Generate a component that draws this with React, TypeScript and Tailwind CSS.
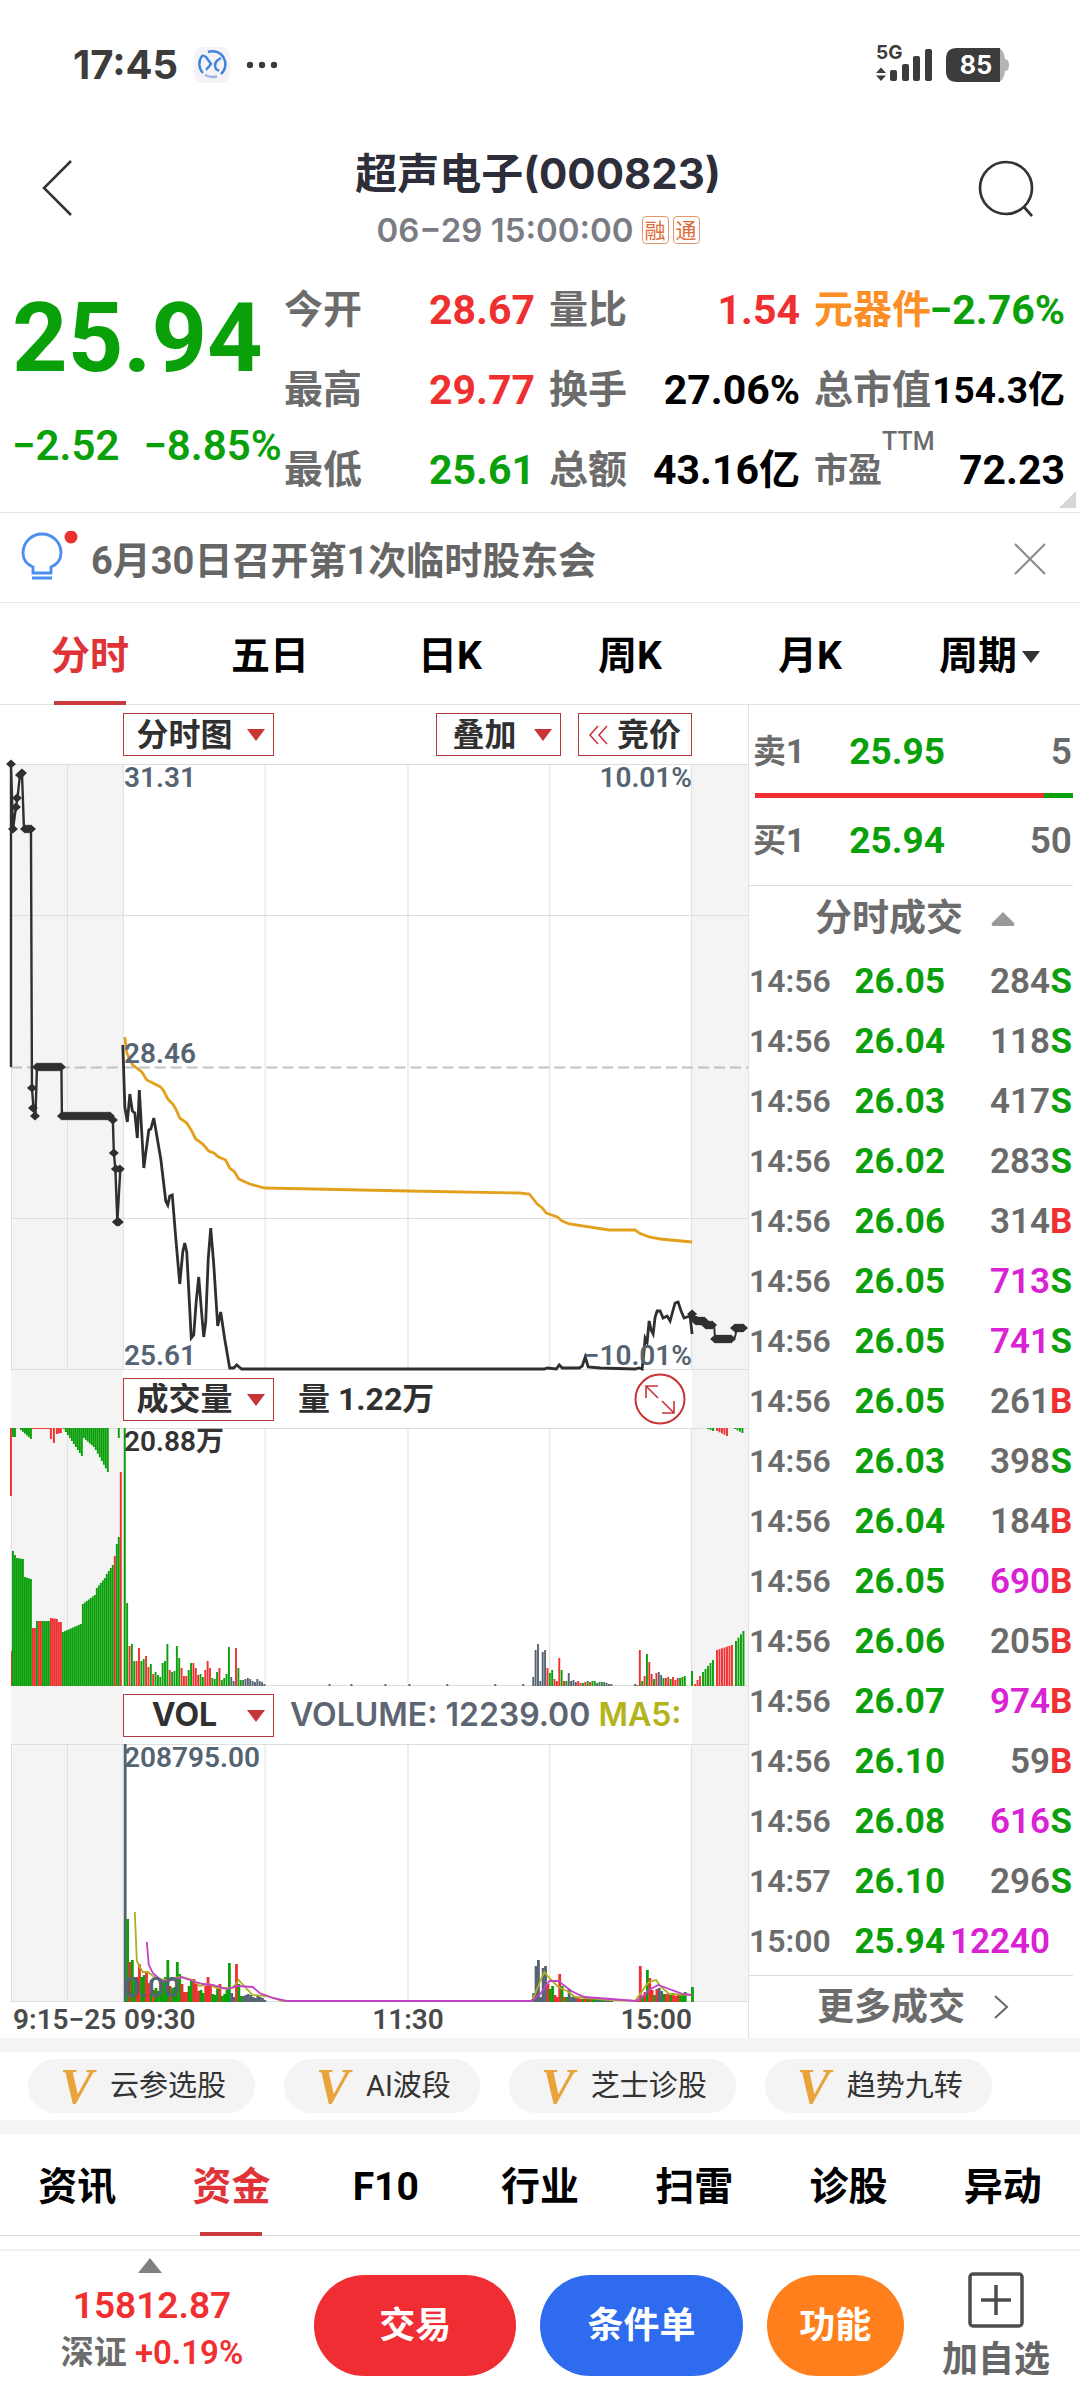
import React, { useState } from "react";
import clsx from "clsx";

const GREEN = "#0aa00a";
const RED = "#f03030";
const SLATE = "#556472";
const MAGENTA = "#c341c6";
const OLIVE = "#b0b01e";

const COLORS: Record<string, string> = { g: GREEN, r: RED, s: SLATE };

const quotes = [
  { label: "今开", value: "28.67", tone: "text-[#f03030]" },
  { label: "量比", value: "1.54", tone: "text-[#f03030]" },
  { label: "元器件", value: "−2.76%", tone: "text-[#0aa00a]", accent: true },
  { label: "最高", value: "29.77", tone: "text-[#f03030]" },
  { label: "换手", value: "27.06%", tone: "text-black" },
  { label: "总市值", value: "154.3亿", tone: "text-black", small: true },
  { label: "最低", value: "25.61", tone: "text-[#0aa00a]" },
  { label: "总额", value: "43.16亿", tone: "text-black" },
  { label: "市盈", value: "72.23", tone: "text-black", sup: "TTM" },
];

const periods = ["分时", "五日", "日K", "周K", "月K", "周期"];
const sections = ["资讯", "资金", "F10", "行业", "扫雷", "诊股", "异动"];
const tools = ["云参选股", "AI波段", "芝士诊股", "趋势九转"];

const trades = [
  ["14:56", "26.05", "284", "S"],
  ["14:56", "26.04", "118", "S"],
  ["14:56", "26.03", "417", "S"],
  ["14:56", "26.02", "283", "S"],
  ["14:56", "26.06", "314", "B"],
  ["14:56", "26.05", "713", "S"],
  ["14:56", "26.05", "741", "S"],
  ["14:56", "26.05", "261", "B"],
  ["14:56", "26.03", "398", "S"],
  ["14:56", "26.04", "184", "B"],
  ["14:56", "26.05", "690", "B"],
  ["14:56", "26.06", "205", "B"],
  ["14:56", "26.07", "974", "B"],
  ["14:56", "26.10", "59", "B"],
  ["14:56", "26.08", "616", "S"],
  ["14:57", "26.10", "296", "S"],
  ["15:00", "25.94", "12240", ""],
];

// ---------- chart data ----------

const preLine =
  "11,303 11,0 13,65 16,43 17.5,34 20,11 22,9 24,65 31,65 32,324 33.5,344 35.5,352 37,303 61.5,303 62,352 110,352 113,356 114,389 115.5,405 117.5,458 120.5,405";

const priceLine =
  "123,281 125,343 127.5,358 130,330 132.5,347 135,349 137.5,374 139.5,326 144,404 149,366 151,365 154,354 161,395 166,437 168,441 170,432 172.5,431 176,474 180,520 183,488 185,479 187,488 191.5,574 194,571 196.5,537 199,513 202,550 204,573 206,558 208.5,495 211,464 214,500 218,562 221,548 225,575 230,604 234,604 237,601 242,605 545,605 548,604 557,605 560,601 563,604 580,604 583,602 586,593 589,603 601,604 636,605 640,604 643,605 645,586 646,574 648,578 650,557 652,566 654,570 656,553 658,547 661,547 664,554 668,552 671,557 674,546 676,539 679,538 682,547 685,554 688,553 691,552 693,570";

const avgLine =
  "125,273 127,289 130,296 133,301 142,308 147,316 153,319 161,323 164,327 168,335 173,340 176,345 180,354 187,359 192,367 196,375 203,380 209,387 214,389 219,393 226,396 230,404 235,408 239,415 250,420 265,424 410,427 520,429 530,430 534,435 538,440 543,444 547,449 558,453 563,457 570,460 610,466 636,466 640,469 650,473 661,475 693,478";

const postLine = "693,550 696,556 700,557 708,559 715,561 716,574 733,575 736,573 738,564 744,564";

const spread = (x0: number, x1: number, y: number) => {
  const out: number[][] = [];
  for (let x = x0; x <= x1; x += 2) out.push([x, y]);
  return out;
};

const marks = [
  [11, 0], [13, 65], [16, 43], [17, 34], [20, 11], [22, 9],
  ...spread(25, 31, 65),
  [32, 324], [33, 344], [35, 352],
  ...spread(37, 61, 303),
  ...spread(62, 111, 352),
  [113, 356], [114, 389], [116, 405], [117, 458], [119, 458], [120, 405],
  [693, 550], [695, 554],
  ...spread(697, 706, 557),
  ...spread(707, 714, 561),
  ...spread(716, 733, 575),
  ...spread(736, 744, 564),
];

const diamonds = marks
  .map(([x, y]) => `M${x - 5} ${y}L${x} ${y - 4.5}L${x + 5} ${y}L${x} ${y + 4.5}Z`)
  .join("");

// [x0, x1, height0, height1, colour]
type Segment = [number, number, number, number, string];

const auctionBottom: Segment[] = [
  [11, 12, 35, 35, "r"],
  [12, 16, 135, 131, "g"],
  [16, 24, 128, 127, "g"],
  [24, 32, 109, 107, "g"],
  [32, 36, 58, 58, "r"],
  [36, 38, 65, 65, "g"],
  [38, 42, 65, 65, "r"],
  [42, 50, 65, 65, "g"],
  [50, 58, 68, 67, "r"],
  [58, 62, 64, 64, "r"],
  [62, 82, 54, 62, "g"],
  [82, 96, 82, 91, "g"],
  [96, 106, 98, 108, "g"],
  [106, 114, 112, 121, "g"],
  [114, 116, 130, 130, "r"],
  [116, 120, 142, 149, "g"],
  [120, 122, 214, 214, "r"],
];

const auctionTop: Segment[] = [
  [10, 12, 68, 68, "r"],
  [12, 16, 9, 9, "g"],
  [20, 32, 2, 11, "g"],
  [32, 50, 1, 1, "r"],
  [50, 52, 11, 11, "r"],
  [53, 55, 15, 15, "r"],
  [56, 62, 6, 5, "r"],
  [63, 83, 1, 28, "g"],
  [83, 95, 10, 19, "g"],
  [95, 109, 22, 44, "g"],
  [118, 120, 10, 10, "g"],
];

const closeBottom: Segment[] = [
  [695, 702, 2, 10, "r"],
  [703, 716, 14, 26, "g"],
  [717, 735, 36, 41, "r"],
  [736, 746, 45, 55, "g"],
];

const closeTop: Segment[] = [
  [708, 716, 1, 3, "g"],
  [717, 730, 3, 8, "r"],
  [735, 745, 1, 5, "g"],
];

const step = 2.37;

const morning =
  "258g 83g 40r 42g 25g 25r 38r 25g 27g 30r 19r 22g 12r 14g 11g 9g 23g 25g 42g 16r 14g 15g 40g 28g 18r 10r 10r 16g 23g 23r 18r 11r 12g 9g 16r 25r 18r 8g 7g 14g 18r 6g 8g 12g 39g 9s 5s 38r 18g 6g 6s 7s 8s 7s 5s 4s 7s 5s 4s 2s";
const noon =
  "9s 36s 42s 5s 34s 36s 18r 13g 16g 7r 5r 28r 16g 5r 5g 13s 5s 6s 4s 5r 3r 3g 4r 5g 4r 5g 5g 3s 4s 4g 4s 3s 2s 2s";
const close =
  "2s 1s 36r 5g 10r 32g 24r 12r 7g 13r 14s 11s 8g 8r 9r 7g 9r 6r 8r 8g 9g 10g";

const toBars = (src: string, x0: number) =>
  src.split(" ").map((s, i) => ({
    x: x0 + i * step,
    h: parseInt(s, 10),
    c: COLORS[s.slice(-1)],
  }));

const dayBars = [
  ...toBars(morning, 125),
  ...toBars(noon, 534),
  ...toBars(close, 636),
  { x: 693, h: 15, c: GREEN },
  ...[330, 352, 386, 410, 448, 496, 524].map((x) => ({ x, h: 2, c: SLATE })),
];

const ma5 =
  "135,168 137,217 140,223 143,228 148,228 157,235 167,236 180,233 193,236 200,242 208,240 217,244 233,244 239,236 247,245 253,251 267,252 283,257 532,257 534,254 541,237 545,228 550,234 559,243 568,247 576,253 612,256 636,257 648,240 652,237 657,236 661,242 670,250 693,251";
const ma10 =
  "147,198 149,221 153,229 162,237 173,236 182,233 193,237 203,240 213,241 227,245 238,242 253,243 260,249 273,254 287,257 532,257 541,250 550,237 559,237 572,247 585,253 612,255 637,257 643,253 650,246 659,241 670,245 684,250 693,251";

const Bars = ({ segments, top, pitch = 2 }: { segments: Segment[]; top?: boolean; pitch?: number }) => (
  <>
    {segments.flatMap(([x0, x1, h0, h1, c], n) => {
      const count = Math.max(1, Math.round((x1 - x0) / pitch));
      return Array.from({ length: count }, (_, i) => {
        const h = count === 1 ? h0 : h0 + ((h1 - h0) * i) / (count - 1);
        return (
          <rect
            key={`${n}-${i}`}
            x={x0 + i * pitch}
            y={top ? 0 : 258 - h}
            width={1.9}
            height={h}
            fill={COLORS[c]}
          />
        );
      });
    })}
  </>
);

const Grid = ({ height, rows = [] }: { height: number; rows?: number[] }) => (
  <>
    <rect x="11" y="0" width="112" height={height} fill="#f4f4f4" />
    <rect x="693" y="0" width="56" height={height} fill="#f4f4f4" />
    <g stroke="#dedede" strokeWidth="1">
      <path d={`M11 0.5H749M11 ${height - 0.5}H749`} />
      {[11, 67, 123, 265, 408, 550, 692].map((x) => (
        <path key={x} d={`M${x}.5 0V${height}`} />
      ))}
      {rows.map((y) => (
        <path key={y} d={`M11 ${y}.5H749`} />
      ))}
    </g>
  </>
);

const Caret = ({ className }: { className?: string }) => (
  <svg viewBox="0 0 18 12" className={className} aria-hidden="true">
    <path d="M0 0H18L9 12Z" fill="currentColor" />
  </svg>
);

const Picker = ({ name, options, className }: any) => (
  <div className={clsx("relative h-[43px] text-[#c93436]", className)}>
    <select
      aria-label={name}
      className="w-full h-full appearance-none border border-[#b5393b] bg-white pl-1 pr-8 text-center text-[32px] leading-none font-bold text-[#303030] outline-none"
    >
      {options.map((o: string) => (
        <option key={o}>{o}</option>
      ))}
    </select>
    <Caret className="absolute right-[9px] top-4 w-[18px] h-3 pointer-events-none" />
  </div>
);

// toolbar between two charts, the shaded sides carry on the auction zones
const ChartBar = ({ children }: { children: React.ReactNode }) => (
  <div className="flex h-[58px] pl-[11px]">
    <div className="w-28 shrink-0 bg-[#f4f4f4]" />
    <div className="flex flex-1 min-w-0 items-center overflow-hidden whitespace-nowrap">{children}</div>
    <div className="w-14 shrink-0 bg-[#f4f4f4]" />
  </div>
);

const StatusBar = () => (
  <div className="flex items-center h-[130px] pl-[73px] pr-[70px] text-[#3c3c3c] font-['Inter','Noto_Sans_CJK_SC',sans-serif]">
    <span className="text-[40px] leading-none font-bold">17:45</span>
    <svg viewBox="0 0 36 36" className="ml-4 w-9 h-9" fill="none" aria-hidden="true">
      <rect width="36" height="36" rx="9" fill="#f5f3f8" />
      <path d="M9 26A13 13 0 0 1 8 9Q9 8 12 10L17 17L12 23" stroke="#3f83dc" strokeWidth="2.4" />
      <path d="M14 5A13 13 0 0 1 27 27M27 11C21 14 20 18 22 22L25 24" stroke="#3f83dc" strokeWidth="2.4" />
      <path d="M11 28Q17 31 23 29.500" stroke="#9fb4e0" strokeWidth="2.400" />
    </svg>
    <svg viewBox="0 0 32 8" className="ml-4 w-8 h-2" fill="#3c3c3c" aria-hidden="true">
      <circle cx="4" cy="4" r="3.200" />
      <circle cx="16" cy="4" r="3.200" />
      <circle cx="28" cy="4" r="3.200" />
    </svg>
    <div className="ml-auto flex items-end h-9 relative">
      <span className="absolute left-0 -top-1 text-[19px] leading-none font-bold">5G</span>
      <svg viewBox="0 0 56 36" className="w-14 h-9" fill="#3c3c3c" aria-hidden="true">
        <path d="M0 26L5 20.500L10 26ZM0 28.500L5 34L10 28.500Z" />
        <rect x="14" y="23" width="7" height="11" rx="2" />
        <rect x="26" y="17" width="7" height="17" rx="2" />
        <rect x="37" y="9" width="7" height="25" rx="2" />
        <rect x="49" y="2" width="7" height="32" rx="2" />
      </svg>
    </div>
    <div className="relative ml-[14px] w-16 h-[34px] flex items-center justify-center text-white">
      <svg viewBox="0 0 64 34" className="absolute inset-0 w-full h-full" aria-hidden="true">
        <path d="M50 0H52Q58 1 59 11Q63 11 63 17Q63 23 59 23Q58 33 52 34H50Z" fill="#b4b4b4" />
        <path d="M11 0H54V34H11Q0 34 0 23V11Q0 0 11 0Z" fill="#3c3c3c" />
      </svg>
      <span className="relative pr-1 text-[25px] leading-none font-bold">85</span>
    </div>
  </div>
);

const Header = () => (
  <header className="flex items-start justify-between pl-10 pr-11 pt-[22px] h-[138px]">
    <button aria-label="返回" className="mt-2 w-[58px]">
      <svg viewBox="0 0 36 56" className="w-9 h-14" fill="none" stroke="#333" strokeWidth="2.500">
        <path d="M31 1L4 28L31 55" />
      </svg>
    </button>
    <div className="flex flex-col items-center font-['Inter','Noto_Sans_CJK_SC',sans-serif]">
      <h1 className="text-[42px] leading-[44px] font-bold text-[#2d2e3a]">超声电子(000823)</h1>
      <div className="mt-4 flex items-center gap-1 text-[33px] leading-9 font-semibold text-[#7b7c83]">
        <span className="mr-1">06−29 15:00:00</span>
        {["融", "通"].map((t) => (
          <span
            key={t}
            className="flex items-center justify-center w-[27px] h-7 rounded-sm border border-[#e4976f] text-[21px] leading-none font-normal text-[#de6c3a]"
          >
            {t}
          </span>
        ))}
      </div>
    </div>
    <button aria-label="搜索" className="mt-2">
      <svg viewBox="0 0 58 58" className="w-[58px] h-[58px]" fill="none" stroke="#333" strokeWidth="2.700">
        <circle cx="28" cy="28" r="26" />
        <path d="M46 47L54 56" />
      </svg>
    </button>
  </header>
);

const Quote = () => (
  <section className="relative flex h-[245px] pl-3 pr-[15px] border-b border-[#e4e4e4]">
    <div className="w-[272px] shrink-0 whitespace-nowrap text-[#0aa00a]">
      <div className="pt-[22px] text-[97px] leading-[97px] font-bold">25.94</div>
      <div className="mt-[38px] flex gap-6 text-[42px] leading-[42px] font-semibold">
        <span>−2.52</span>
        <span>−8.85%</span>
      </div>
    </div>
    <dl className="flex-1 grid grid-cols-3 gap-x-[14px] auto-rows-[80px] pt-0.5">
      {quotes.map((q) => (
        <div key={q.label} className="flex items-center justify-between whitespace-nowrap">
          <dt
            className={clsx(
              "relative leading-none font-bold",
              q.accent ? "text-[#fb8f25]" : "text-[#6c6c6c]",
              q.sup ? "text-[34px]" : "text-[39px]",
            )}
          >
            {q.label}
            {q.sup && <span className="absolute left-full -top-6 text-[25px] leading-none font-medium">{q.sup}</span>}
          </dt>
          <dd
            className={clsx(
              "leading-none font-bold relative",
              q.accent && "-ml-4",
              q.small ? "text-[37px]" : "text-[41px]",
              q.tone,
            )}
          >
            {q.value}
          </dd>
        </div>
      ))}
    </dl>
    <svg viewBox="0 0 17 17" className="absolute right-1 bottom-1 w-[17px] h-[17px]" aria-hidden="true">
      <path d="M17 0V17H0Z" fill="#d6d6d6" />
    </svg>
  </section>
);

const Notice = () => (
  <section className="flex items-center h-[90px] pl-5 pr-[34px] pt-0.5 border-b border-[#e8e8e8]">
    <svg viewBox="0 0 60 56" className="w-[60px] h-14" fill="none" aria-hidden="true">
      <path
        d="M13 42V36C6 33 3 28 3 22A19 19 0 0 1 41 22C41 28 38 33 31 36V42ZM12 47H32"
        stroke="#4b8df0"
        strokeWidth="2.800"
      />
      <circle cx="51" cy="6" r="6.500" fill="#ec2f2f" />
    </svg>
    <p className="ml-[11px] pt-1 text-[38px] leading-none font-bold text-[#666] whitespace-nowrap">
      6月30日召开第1次临时股东会
    </p>
    <button aria-label="关闭" className="ml-auto">
      <svg viewBox="0 0 32 32" className="w-8 h-8" stroke="#8b8b8b" strokeWidth="2">
        <path d="M1 1L31 31M31 1L1 31" />
      </svg>
    </button>
  </section>
);

const Charts = () => (
  <div className="flex-1 min-w-0">
    <div className="flex items-center h-[59px] pl-[123px] pr-14">
      <Picker name="图表类型" options={["分时图", "分时量"]} className="w-[151px]" />
      <Picker name="叠加" options={["叠加"]} className="ml-auto w-[125px]" />
      <button className="ml-[17px] flex items-center h-[43px] w-[114px] border border-[#b5393b] pl-2.5 text-[32px] leading-none font-bold text-[#303030] whitespace-nowrap">
        <svg viewBox="0 0 20 20" className="mr-2 w-5 h-5" fill="none" stroke="#c93436" strokeWidth="1.500">
          <path d="M9 1L1 10L9 19M18 1L10 10L18 19" />
        </svg>
        竞价
      </button>
    </div>

    <div className="relative text-[28px] leading-none font-semibold text-[#556472]">
      <svg viewBox="0 0 749 606" preserveAspectRatio="none" className="block w-full h-[606px] overflow-visible" fill="none">
        <Grid height={606} rows={[151, 454]} />
        <path d="M11 303.500H749" stroke="#bfc1c2" strokeWidth="1.800" strokeDasharray="11 5" />
        <polyline points={avgLine} stroke="#e3a01c" strokeWidth="2.800" />
        <polyline points={preLine} stroke="#2f2f2f" strokeWidth="2.400" />
        <polyline points={priceLine} stroke="#2f2f2f" strokeWidth="2.800" />
        <polyline points={postLine} stroke="#2f2f2f" strokeWidth="2" />
        <path d={diamonds} fill="#2f2f2f" />
      </svg>
      <span className="absolute left-[124px] top-0">31.31</span>
      <span className="absolute left-[124px] top-[276px]">28.46</span>
      <span className="absolute left-[124px] bottom-0">25.61</span>
      <span className="absolute right-14 top-0">10.01%</span>
      <span className="absolute right-14 bottom-0">−10.01%</span>
    </div>

    <ChartBar>
      <Picker name="指标一" options={["成交量", "成交额"]} className="w-[151px]" />
      <span className="ml-6 text-[32px] leading-none font-bold text-[#303030]">量 1.22万</span>
      <button aria-label="全屏" className="ml-auto mr-[6px]">
        <svg viewBox="0 0 52 52" className="w-[52px] h-[52px]" fill="none" stroke="#c93436" strokeWidth="2">
          <circle cx="26" cy="26" r="24.500" />
          <path d="M12 25V13H24M12 13L24 25M40 28V40H28M40 40L28 28" strokeWidth="1.600" />
        </svg>
      </button>
    </ChartBar>

    <div className="relative">
      <svg viewBox="0 0 749 258" preserveAspectRatio="none" className="block w-full h-[258px]">
        <Grid height={258} />
        <Bars segments={auctionBottom} />
        <Bars segments={auctionTop} top />
        <Bars segments={closeBottom} pitch={2.5} />
        <Bars segments={closeTop} top pitch={2.5} />
        {dayBars.map((b, i) => (
          <rect key={i} x={b.x - 1} y={258 - b.h} width={1.9} height={b.h} fill={b.c} />
        ))}
      </svg>
      <span className="absolute left-[124px] top-0 text-[28px] leading-none font-semibold text-[#333]">20.88万</span>
    </div>

    <ChartBar>
      <Picker name="指标二" options={["VOL", "MACD", "KDJ"]} className="w-[151px] font-['Inter',sans-serif]" />
      <p className="ml-4 text-[32px] leading-none font-semibold text-[#5e6572] font-['Inter',sans-serif]">
        VOLUME: 12239.00 <span className="text-[#b3b31a]">MA5:</span>
      </p>
    </ChartBar>

    <div className="relative text-[28px] leading-none font-semibold text-[#556472]">
      <svg viewBox="0 0 749 258" preserveAspectRatio="none" className="block w-full h-[258px]" fill="none">
        <Grid height={258} />
        {dayBars.map((b, i) => (
          <rect key={i} x={b.x - 1} y={258 - b.h} width={2.8} height={b.h} fill={i === 0 ? SLATE : b.c} />
        ))}
        <polyline points={ma5} stroke={OLIVE} strokeWidth="1.800" />
        <polyline points={ma10} stroke={MAGENTA} strokeWidth="1.800" />
      </svg>
      <span className="absolute left-[124px] top-0">208795.00</span>
      <span className="absolute left-[124px] bottom-0">0.00</span>
    </div>

    <div className="flex items-center h-9 pl-[13px] pr-14 text-[28px] leading-none font-semibold text-[#4a4a4a] whitespace-nowrap">
      <span className="w-[111px]">9:15−25</span>
      <span>09:30</span>
      <span className="flex-1 text-center">11:30</span>
      <span>15:00</span>
    </div>
  </div>
);

const OrderRow = ({ side, price, qty }: { side: string; price: string; qty: string }) => (
  <div className="flex items-center h-[84px] pl-1 pr-2 leading-none">
    <span className="w-[80px] text-[33px] font-bold text-[#6c6c6c]">{side}</span>
    <span className="w-[112px] text-right text-[37px] font-bold text-[#0aa00a]">{price}</span>
    <span className="flex-1 text-right text-[37px] font-semibold text-[#6a6a6a]">{qty}</span>
  </div>
);

const Book = () => (
  <aside className="w-[332px] shrink-0 border-l border-[#e2e2e2]">
    <div className="pt-1">
      <OrderRow side="卖1" price="25.95" qty="5" />
      <div className="ml-1.5 mr-[7px] flex h-[5px]">
        <div className="flex-1 bg-[#f03030]" />
        <div className="w-[29px] bg-[#0aa00a]" />
      </div>
      <OrderRow side="买1" price="25.94" qty="50" />
    </div>
    <button className="flex items-center justify-center gap-7 mt-[3px] w-[324px] h-[66px] border-t border-[#dcdcdc] text-[37px] leading-none font-bold text-[#6c6c6c]">
      <span className="pl-2">分时成交</span>
      <svg viewBox="0 0 24 14" className="w-6 h-[14px]" aria-hidden="true">
        <path d="M12 0L23 11Q24 14 22 14H2Q0 14 1 11Z" fill="#999" />
      </svg>
    </button>
    <table className="w-full table-fixed border-collapse leading-none">
      <tbody>
        {trades.map(([time, price, vol, side], i) => (
          <tr key={i} className="h-[60px]">
            <td className="w-[84px] p-0 text-[32px] font-semibold text-[#6c6c6c]">{time}</td>
            <td className="w-[112px] p-0 text-right text-[35px] font-bold text-[#0aa00a]">{price}</td>
            <td
              className={clsx(
                "p-0 text-right text-[35px] font-semibold",
                Number(vol) >= 500 ? "text-[#d822d3]" : "text-[#6a6a6a]",
              )}
            >
              {vol}
            </td>
            <td
              className={clsx(
                "w-[30px] p-0 pr-2 text-right text-[35px] font-bold",
                side === "S" ? "text-[#0aa00a]" : "text-[#f03030]",
              )}
            >
              {side}
            </td>
          </tr>
        ))}
      </tbody>
    </table>
    <button className="flex items-center justify-center gap-7 mt-1 w-[324px] h-[63px] border-t border-[#dcdcdc] text-[37px] leading-none font-bold text-[#6c6c6c]">
      <span className="pl-1">更多成交</span>
      <svg viewBox="0 0 16 24" className="w-4 h-6" fill="none" stroke="#666" strokeWidth="2" aria-hidden="true">
        <path d="M2 1L14 12L2 23" />
      </svg>
    </button>
  </aside>
);

const BottomBar = () => (
  <footer className="mt-[13px] flex items-start h-[151px] border-t-2 border-[#f1f1f1] pl-12 pr-[30px]">
    <a href="#index" className="relative flex flex-col items-center w-[208px] pt-[37px] whitespace-nowrap">
      <svg viewBox="0 0 24 15" className="absolute left-[90px] top-[7px] w-6 h-[15px]" aria-hidden="true">
        <path d="M12 0L24 15H0Z" fill="#808080" />
      </svg>
      <span className="text-[37px] leading-9 font-semibold text-[#f03030]">15812.87</span>
      <span className="mt-[13px] text-[33px] leading-8 font-bold text-[#6c6c6c]">
        深证 <b className="font-semibold text-[#f03030]">+0.19%</b>
      </span>
    </a>
    <div className="ml-[58px] mt-6 flex flex-1 gap-6 text-[36px] leading-none font-bold text-white whitespace-nowrap">
      <button className="flex-[202] h-[101px] rounded-full bg-[#f02d32]">交易</button>
      <button className="flex-[202] h-[101px] rounded-full bg-[#2e6bef]">条件单</button>
      <button className="flex-[137] h-[101px] rounded-full bg-[#ff7f1d]">功能</button>
    </div>
    <button className="ml-[38px] mt-[21px] flex flex-col items-center text-[36px] leading-9 font-bold text-[#666] whitespace-nowrap">
      <svg viewBox="0 0 56 56" className="mb-3.5 w-14 h-14" fill="none" stroke="#4c4c4c" strokeWidth="3.500">
        <rect x="2" y="2" width="52" height="52" rx="3" />
        <path d="M28 13V43M13 28H43" />
      </svg>
      加自选
    </button>
  </footer>
);

export default function App() {
  const [period, setPeriod] = useState("分时");
  const [section, setSection] = useState("资金");

  return (
    <div className="w-full overflow-hidden bg-white font-['Roboto','Noto_Sans_CJK_SC',sans-serif]">
      <StatusBar />
      <Header />
      <Quote />
      <Notice />

      <nav className="grid grid-cols-6 h-[102px] border-b border-[#dfe3df]">
        {periods.map((p) => (
          <button
            key={p}
            onClick={() => setPeriod(p)}
            className={clsx(
              "relative flex items-center justify-center pt-1.5 text-[39px] leading-none font-bold whitespace-nowrap",
              p === period ? "text-[#e03337]" : "text-black",
            )}
          >
            {p}
            {p === "周期" && <Caret className="ml-1 w-5 h-3 text-[#333]" />}
            {p === period && <span className="absolute -bottom-px w-[72px] h-1 bg-[#c93a3d]" />}
          </button>
        ))}
      </nav>

      <main className="flex">
        <Charts />
        <Book />
      </main>

      <section className="flex items-center gap-[29px] h-24 border-y-[14px] border-[#f4f4f4] px-7 whitespace-nowrap">
        {tools.map((t) => (
          <button
            key={t}
            className="flex items-center h-[54px] rounded-full bg-[#f4f4f4] pl-8 pr-[29px] text-[29px] leading-none text-[#333]"
          >
            <span className="w-[50px] text-left text-[50px] leading-none font-bold italic text-[#e9a33b] font-['Liberation_Serif',serif]">
              V
            </span>
            {t}
          </button>
        ))}
      </section>

      <nav className="grid grid-cols-7 h-[102px] border-b border-[#dcdcdc]">
        {sections.map((s) => (
          <button
            key={s}
            onClick={() => setSection(s)}
            className={clsx(
              "relative flex items-center justify-center pt-1.5 text-[39px] leading-none font-bold",
              s === section ? "text-[#e03337]" : "text-black",
            )}
          >
            {s}
            {s === section && <span className="absolute -bottom-px w-[62px] h-1 bg-[#c93a3d]" />}
          </button>
        ))}
      </nav>

      <BottomBar />
    </div>
  );
}
